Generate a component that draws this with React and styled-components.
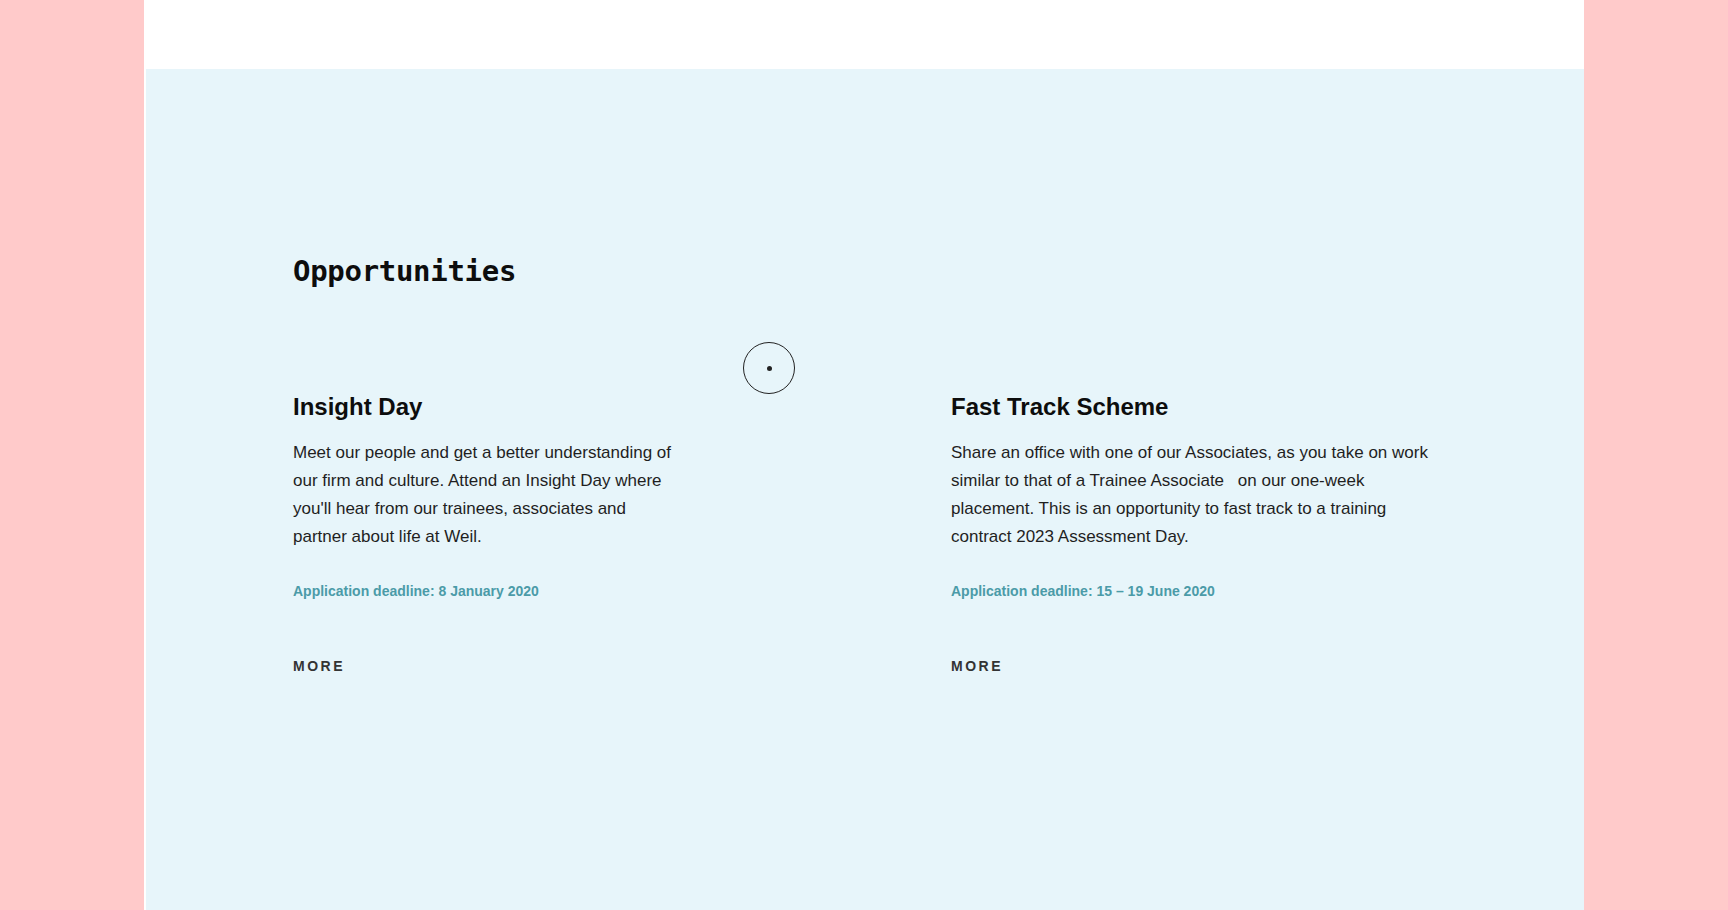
import React from 'react'
import styled, { createGlobalStyle } from 'styled-components'

const GlobalStyle = createGlobalStyle`
   html, body {
      margin: 0;
      padding: 0;
      background-color: #ffcaca;
   }
   * {
      box-sizing: border-box;
   }
`

const Page = styled.div`
   position: relative;
   width: 1440px;
   min-height: 100vh;
   margin: 0 auto;
   background-color: #ffffff;
   display: flex;
   flex-direction: column;
`

const TopBar = styled.header`
   height: 69px;
   background-color: #ffffff;
`

const Section = styled.section`
   flex: 1;
   margin-left: 2px;
   background-color: #e7f5fa;
   padding: 184px 0 0 147px;
`

const Title = styled.h2`
   margin: 0;
   font-family: "DejaVu Sans Mono", monospace;
   font-weight: bold;
   font-size: 29px;
   line-height: 36px;
   letter-spacing: -0.3px;
   color: #0d0d0d;
`

const Row = styled.div`
   display: flex;
   margin-top: 103px;
`

const Card = styled.article`
   width: ${p => p.$col}px;
   font-family: "Liberation Sans", Arial, sans-serif;
`

const CardTitle = styled.h3`
   margin: 0;
   font-size: 24px;
   line-height: 30px;
   font-weight: bold;
   color: #0d0d0d;
`

const Text = styled.p`
   margin: 17px 0 0;
   max-width: ${p => p.$max}px;
   font-size: 17px;
   line-height: 28px;
   color: #1f1f1f;
`

const Gap = styled.span`
   display: inline-block;
   width: 9px;
`

const Deadline = styled.div`
   margin-top: 30px;
   font-size: 14px;
   line-height: 20px;
   font-weight: bold;
   color: #4b9ba8;
`

const More = styled.a`
   display: block;
   margin-top: 55px;
   font-size: 14px;
   line-height: 20px;
   font-weight: bold;
   letter-spacing: 2.5px;
   color: #333333;
   text-decoration: none;
`

const Cursor = styled.div`
   position: absolute;
   left: ${769 - 144 - 26}px;
   top: ${368 - 26}px;
   width: 52px;
   height: 52px;
   border: 1.5px solid #222;
   border-radius: 50%;
   display: flex;
   align-items: center;
   justify-content: center;
   pointer-events: none;

   &::after {
      content: '';
      width: 5px;
      height: 5px;
      border-radius: 50%;
      background-color: #222;
   }
`

function App() {
   return (
      <>
         <GlobalStyle />
         <Page>
            <TopBar />
            <Section>
               <Title>Opportunities</Title>
               <Row>
                  <Card $col={658}>
                     <CardTitle>Insight Day</CardTitle>
                     <Text $max={384}>
                        Meet our people and get a better understanding of our firm and culture.
                        Attend an Insight Day where you'll hear from our trainees, associates and
                        partner about life at Weil.
                     </Text>
                     <Deadline>Application deadline: 8 January 2020</Deadline>
                     <More href="#">MORE</More>
                  </Card>
                  <Card $col={520}>
                     <CardTitle>Fast Track Scheme</CardTitle>
                     <Text $max={480}>
                        Share an office with one of our Associates, as you take on work similar to
                        that of a Trainee Associate<Gap /> on our one-week placement. This is an
                        opportunity to fast track to a training contract 2023 Assessment Day.
                     </Text>
                     <Deadline>Application deadline: 15 – 19 June 2020</Deadline>
                     <More href="#">MORE</More>
                  </Card>
               </Row>
            </Section>
            <Cursor />
         </Page>
      </>
   )
}

export default App
